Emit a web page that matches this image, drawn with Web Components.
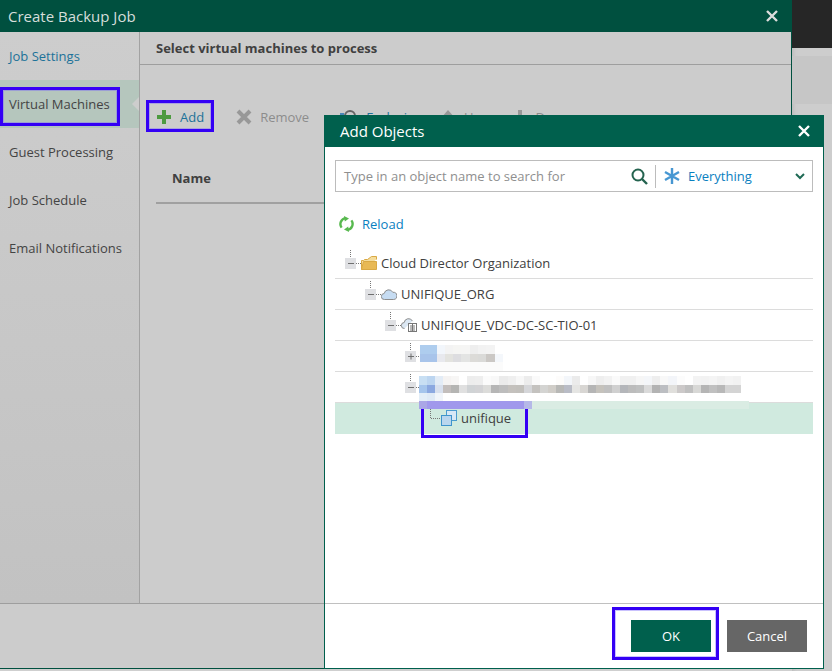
<!DOCTYPE html>
<html>
<head>
<meta charset="utf-8">
<title>Create Backup Job</title>
<style>
  html, body { margin: 0; height: 100%; overflow: hidden; background: #cfcfcf; }
  body { font-family: "Open Sans", "Liberation Sans", sans-serif; font-size: 13px; color: #404040; }
</style>
</head>
<body>
<backup-screen>
  <job-window title-text="Create Backup Job">
    <nav-item slot="nav" link>Job Settings</nav-item>
    <nav-item slot="nav" selected>Virtual Machines</nav-item>
    <nav-item slot="nav">Guest Processing</nav-item>
    <nav-item slot="nav">Job Schedule</nav-item>
    <nav-item slot="nav">Email Notifications</nav-item>

    <tool-button icon="add">Add</tool-button>
    <tool-button icon="remove" disabled style="margin-left:32px;gap:8px">Remove</tool-button>
    <tool-button icon="exclude" style="margin-left:31px;gap:8px">Exclusions</tool-button>
    <tool-button icon="up" disabled style="margin-left:12px">Up</tool-button>
    <tool-button icon="down" disabled style="margin-left:31px">Down</tool-button>
  </job-window>

  <add-objects>
    <tree-row level="0" toggle="minus" icon="folder">Cloud Director Organization</tree-row>
    <tree-row level="1" toggle="minus" icon="cloud">UNIFIQUE_ORG</tree-row>
    <tree-row level="2" toggle="minus" icon="vdc">UNIFIQUE_VDC-DC-SC-TIO-01</tree-row>
    <tree-row level="3" toggle="plus">
      <pixel-blur cell="8.3" style="left:85px;top:4px" rows="aecdee,aecdee,f2f6fb,f3f3f3,f5f5f3,f5f5f4,eeeeee,f2f2f2,f3f3f3,ffffff|a8c4ea,a8c4ea,e8e9ee,e3e3df,dddde0,e3e4e3,dcdbd8,dadad8,cbc8c5,f4f7fb|fbfbfb,fbfbfb,fbfbfb,fbfbfb,fbfbfb,fbfbfb,fbfbfb,fbfbfb,fbfbfb,fbfbfb"></pixel-blur>
    </tree-row>
    <tree-row level="3" toggle="minus">
      <pixel-blur cell="8.05" style="left:84px;top:4px" rows="c8dff3,bcd5f0,e3ecf6,f5f3f2,f7f6f5,ffffff,ededed,eeeeee,fbfbfb,f8f8f8,ebebeb,efefef,f7f7f7,ececec,fafafa,ffffff,ffffff,fdfcfb,f3f6fa,ebebeb,ffffff,f7f7f7,eeeeee,f2f2f2,fafafa,f0f0f0,f0f0f0,f6f6f6,f4f6f9,eeeeee,f8f8f8,f3f5f9,fcfcfc,ffffff,f3f3f3,f2f2f2,f4f4f4,f0f0f0,f4f4f4,f2f2f2|a5c5ec,8ba8e0,d8e0ee,c3bebc,b5b5b3,e0e0e0,d0d3d5,d3d3d5,dcdcda,b6b6b6,bdbdbd,c4c1bd,c2c0bc,d5d6d9,c4c2bf,d4d4d2,d0cdc8,b8b8b6,b9bcc6,e5e5e3,d8d6d3,b5b5b5,c5c2bc,c0c0c0,d0d0d0,b4b6ba,bcbcbc,bfc0c0,dadada,b3b3b3,bcbec2,e0dfdc,ccc9c9,c0c0c0,d8d8d6,b5b5b5,c0c0c0,b8b8b8,d4d4d4,d4d4d4|e3eef8,dfeaf6,f1f5fa"></pixel-blur>
    </tree-row>
    <tree-row level="4" toggle="leaf" icon="vapp" selected>unifique</tree-row>
  </add-objects>

  <mark-box style="left:0;top:87px;width:120px;height:39px"></mark-box>
  <mark-box style="left:146px;top:100px;width:68px;height:32px"></mark-box>
  <mark-box open-top style="left:421px;top:405px;width:107px;height:33px"></mark-box>
  <mark-box style="left:612px;top:607px;width:107px;height:53px"></mark-box>
  <mark-band></mark-band>
</backup-screen>

<script>
const ICONS = {
  add: `<svg width="14" height="14" viewBox="0 0 14 14"><path d="M5 0h4v5h5v4H9v5H5V9H0V5h5z" fill="#4d9a40"/></svg>`,
  remove: `<svg width="16" height="16" viewBox="0 0 16 16"><path d="M2 2l12 12M14 2L2 14" stroke="#989898" stroke-width="4"/></svg>`,
  exclude: `<svg width="18" height="16" viewBox="0 0 18 16"><path d="M5 7a5 5 0 0 1 10 0v6" fill="none" stroke="#666" stroke-width="2"/><rect x="0" y="4" width="4" height="3" fill="#4a86b8"/></svg>`,
  up: `<svg width="14" height="14" viewBox="0 0 14 14"><path d="M7 0l7 8H0z" fill="#989898"/></svg>`,
  down: `<svg width="14" height="14" viewBox="0 0 14 14"><path d="M5 0h4v8h5l-7 6-7-6h5z" fill="#989898"/></svg>`,
  folder: `<svg width="16" height="14" viewBox="0 0 16 14"><path d="M.5 13.5V4.5h2l1-1h3l4-3h5v3" fill="#f5dd9c" stroke="#d9a945"/><path d="M.5 13.5l2-8h13v8z" fill="#e8b955" stroke="#d9a945"/></svg>`,
  cloud: `<svg width="16" height="12" viewBox="0 0 16 12"><path d="M3.5 11.5a3 3 0 0 1-.3-6 4.6 4.6 0 0 1 8.6-1.2 3.6 3.6 0 0 1 .9 7.2z" fill="#c6dcf2" stroke="#8d8d8d"/></svg>`,
  vdc: `<svg width="16" height="14" viewBox="0 0 16 14"><path d="M3.5 10.5a3 3 0 0 1-.3-6 4.4 4.4 0 0 1 8.3-1.4" fill="#dbe7f3" stroke="#8d8d8d"/><rect x="7.5" y="5.5" width="8" height="8" fill="#fff" stroke="#777"/><path d="M9 8h5M9 10h5M9 12h5M11.5 6v7" stroke="#777"/></svg>`,
  vapp: `<svg width="16" height="16" viewBox="0 0 16 16"><rect x="5.5" y=".5" width="10" height="10" fill="#d7e8f6" stroke="#4a9ccf"/><rect x=".5" y="5.5" width="10" height="10" fill="#b9d6ee" stroke="#3e94cc"/></svg>`,
  close: `<svg width="12" height="12" viewBox="0 0 12 12"><path d="M1 1l10 10M11 1L1 11" stroke="currentColor" stroke-width="2.4"/></svg>`,
  search: `<svg width="17" height="17" viewBox="0 0 17 17"><circle cx="7" cy="7" r="5.5" fill="none" stroke="#24634f" stroke-width="2"/><path d="M11 11l5 5" stroke="#24634f" stroke-width="2.4"/></svg>`,
  star: `<svg width="16" height="16" viewBox="0 0 16 16"><path d="M8 0v16M1 4l14 8M15 4L1 12" stroke="#4797d2" stroke-width="2.4"/></svg>`,
  chevron: `<svg width="10" height="7" viewBox="0 0 10 7"><path d="M1 1l4 4 4-4" fill="none" stroke="#1f6a55" stroke-width="2"/></svg>`,
  reload: `<svg width="15" height="16" viewBox="0 0 15 16"><path d="M2.6 11.6A6 6 0 0 1 6.5 2.1" fill="none" stroke="#58b94f" stroke-width="2.4"/><path d="M5 0l5 2.4L5.8 5.6z" fill="#58b94f"/><path d="M12.4 4.4a6 6 0 0 1-3.9 9.5" fill="none" stroke="#58b94f" stroke-width="2.4"/><path d="M10 16l-5-2.4 4.2-3.2z" fill="#58b94f"/></svg>`
};

class BackupScreen extends HTMLElement {
  constructor() {
    super();
    this.attachShadow({ mode: "open" }).innerHTML = `
      <style>
        :host { display: flex; position: relative; width: 832px; height: 671px; overflow: hidden; }
        .side { flex: 1; display: flex; flex-direction: column; background: #cdcdcd; box-shadow: inset 4px 0 4px -3px #b8b8b8; }
        .top { height: 48px; background: #262626; }
        .gap { height: 8px; }
        .panel { height: 48px; background: #c6c6c6; }
      </style>
      <slot></slot>
      <div class="side"><div class="top"></div><div class="gap"></div><div class="panel"></div></div>`;
  }
}

class JobWindow extends HTMLElement {
  constructor() {
    super();
    this.attachShadow({ mode: "open" }).innerHTML = `
      <style>
        :host { display: flex; flex-direction: column; box-sizing: border-box; width: 792px; height: 669px; background: #ccc; border-bottom: 1px solid #00503f; flex: none; }
        header { display: flex; align-items: center; justify-content: space-between; height: 32px; padding: 0 14px 0 8px; background: #00503f; color: #d6dedb; font-size: 15px; }
        header span.x { display: flex; color: #dcdcdc; }
        .body { flex: 1; display: flex; min-height: 0; border-right: 1px solid #00503f; }
        nav { width: 139px; border-right: 1px solid #a2a2a2; background: linear-gradient(#cdcdcd, #c2c2c2); }
        main { flex: 1; }
        h2 { margin: 0; height: 32px; padding-left: 16px; font-size: 13px; font-weight: 700; line-height: 32px; color: #404040; border-bottom: 1px solid #9e9e9e; }
        .tools { display: flex; align-items: center; height: 32px; margin-top: 36px; padding-left: 17px; }
        .head { margin: 21px 0 0 16px; padding-left: 16px; height: 48px; line-height: 48px; font-weight: 700; color: #404040; border-bottom: 2px solid #a0a0a0; }
        footer { height: 64px; border-top: 1px solid #9e9e9e; border-right: 1px solid #00503f; }
      </style>
      <header><span>${this.getAttribute("title-text")}</span><span class="x">${ICONS.close}</span></header>
      <div class="body">
        <nav><slot name="nav"></slot></nav>
        <main>
          <h2>Select virtual machines to process</h2>
          <div class="tools"><slot></slot></div>
          <div class="head">Name</div>
        </main>
      </div>
      <footer></footer>`;
  }
}

class NavItem extends HTMLElement {
  constructor() {
    super();
    this.attachShadow({ mode: "open" }).innerHTML = `
      <style>
        :host { display: block; position: relative; height: 48px; line-height: 48px; padding-left: 9px; color: #444; }
        :host([link]) { color: #1c7299; }
        :host([selected]) { background: #b5c6bd; }
        :host([selected])::after { content: ""; position: absolute; right: 0; top: 17px; width: 7px; height: 14px; background: #cdcdcd; clip-path: polygon(100% 0, 0 50%, 100% 100%); }
      </style>
      <slot></slot>`;
  }
}

class ToolButton extends HTMLElement {
  constructor() {
    super();
    this.attachShadow({ mode: "open" }).innerHTML = `
      <style>
        :host { display: inline-flex; align-items: center; gap: 9px; color: #1c7299; flex: none; }
        :host([disabled]) { color: #8c8c8c; }
        .i { display: flex; }
      </style>
      <span class="i">${ICONS[this.getAttribute("icon")]}</span><slot></slot>`;
  }
}

class AddObjects extends HTMLElement {
  constructor() {
    super();
    this.attachShadow({ mode: "open" }).innerHTML = `
      <style>
        :host { position: absolute; left: 324px; top: 115px; z-index: 2; display: flex; flex-direction: column; box-sizing: border-box; width: 500px; height: 554px; background: #fff; border: solid #00604d; border-width: 0 1px 1px; }
        header { display: flex; align-items: center; justify-content: space-between; height: 32px; margin: 0 -1px; padding: 0 14px 0 16px; background: #00604d; color: #fff; font-size: 15px; }
        header .x { display: flex; color: #fff; }
        .search { display: flex; align-items: center; box-sizing: border-box; height: 32px; margin: 13px 10px 0; padding: 0 7px 0 8px; border: 1px solid #bcbcbc; }
        .hint { flex: 1; color: #8f8f8f; }
        .sep { width: 1px; height: 23px; margin: 0 8px 0 7px; background: #bcbcbc; }
        .everything { flex: none; width: 107px; margin-left: 8px; color: #0a80bf; }
        .i { display: flex; }
        .reload { display: flex; align-items: center; gap: 8px; height: 31px; margin: 16px 10px 1px; padding-left: 4px; color: #0a80bf; }
        .tree { margin: 8px 10px 0; }
        footer { display: flex; justify-content: flex-end; gap: 16px; margin-top: auto; height: 48px; padding: 16px 16px 0 0; border-top: 1px solid #c0c0c0; }
        button { width: 80px; height: 32px; border: 0; padding: 0; color: #fff; font: inherit; background: #00604d; }
        button.c { background: #666; }
      </style>
      <header><span>Add Objects</span><span class="x">${ICONS.close}</span></header>
      <div class="search">
        <span class="hint">Type in an object name to search for</span>
        <span class="i">${ICONS.search}</span>
        <span class="sep"></span>
        <span class="i">${ICONS.star}</span>
        <span class="everything">Everything</span>
        <span class="i">${ICONS.chevron}</span>
      </div>
      <div class="reload"><span class="i">${ICONS.reload}</span>Reload</div>
      <div class="tree"><slot></slot></div>
      <footer><button>OK</button><button class="c">Cancel</button></footer>`;
  }
}

class TreeRow extends HTMLElement {
  toggleSvg(kind) {
    const dots = `stroke="#777" stroke-dasharray="1 1"`;
    if (kind === "leaf")
      return `<svg width="16" height="30" viewBox="0 0 16 30"><path d="M5.5 0v15.5H16" fill="none" ${dots}/></svg>`;
    const mark = kind === "plus" ? `M3 15.5h6M6 12.5v6` : `M3 15.5h6`;
    return `<svg width="16" height="30" viewBox="0 0 16 30">
      <path d="M5.5 2v8M11 15.5h5" fill="none" ${dots}/>
      <rect x="0" y="10" width="11" height="11" fill="#dfe0e3"/>
      <path d="${mark}" stroke="#6f6f6f"/></svg>`;
  }
  constructor() {
    super();
    const level = Number(this.getAttribute("level"));
    const icon = ICONS[this.getAttribute("icon")] || "";
    this.attachShadow({ mode: "open" }).innerHTML = `
      <style>
        :host { display: flex; align-items: center; position: relative; box-sizing: border-box; height: 31px; padding-left: ${10 + level * 20}px; border-bottom: 1px solid #dcdcdc; color: #404040; }
        :host([selected]) { background: #d0eadf; border-bottom-color: #d0eadf; }
        .t { display: flex; flex: none; }
        .i { display: flex; justify-content: center; width: 16px; flex: none; margin-right: 4px; }
      </style>
      <span class="t">${this.toggleSvg(this.getAttribute("toggle"))}</span>
      ${icon ? `<span class="i">${icon}</span>` : ""}
      <slot></slot>`;
  }
}

// the smeared-out names in the screenshot, drawn cell by cell
class PixelBlur extends HTMLElement {
  constructor() {
    super();
    const cell = this.getAttribute("cell");
    const rows = this.getAttribute("rows").split("|").map(r =>
      `<div class="r">${r.split(",").map(c => `<i style="background:#${c}"></i>`).join("")}</div>`).join("");
    this.attachShadow({ mode: "open" }).innerHTML = `
      <style>
        :host { position: absolute; z-index: 1; }
        .r { display: flex; height: 8.6px; }
        i { display: block; width: ${cell}px; flex: none; }
      </style>
      ${rows}`;
  }
}

class MarkBox extends HTMLElement {
  constructor() {
    super();
    this.attachShadow({ mode: "open" }).innerHTML = `
      <style>
        :host { position: absolute; z-index: 3; box-sizing: border-box; border: 3px solid #3400f5; outline: 1px solid rgba(120,100,250,.4); outline-offset: -4px; }
        :host([open-top]) { border-top: 0; outline: 0; }
      </style>`;
  }
}

// washed-out top edge of the box round "unifique"
class MarkBand extends HTMLElement {
  constructor() {
    super();
    this.attachShadow({ mode: "open" }).innerHTML = `
      <style>
        :host { position: absolute; z-index: 4; left: 419px; top: 401px; width: 330px; height: 8px; background: linear-gradient(90deg, #aaa6e6 8px, #a098ec 8px, #a098ec 105px, #b5b8e8 105px, #b5b8e8 113px, #daece3 113px); }
      </style>`;
  }
}

customElements.define("backup-screen", BackupScreen);
customElements.define("job-window", JobWindow);
customElements.define("nav-item", NavItem);
customElements.define("tool-button", ToolButton);
customElements.define("add-objects", AddObjects);
customElements.define("tree-row", TreeRow);
customElements.define("pixel-blur", PixelBlur);
customElements.define("mark-box", MarkBox);
customElements.define("mark-band", MarkBand);
</script>
</body>
</html>
